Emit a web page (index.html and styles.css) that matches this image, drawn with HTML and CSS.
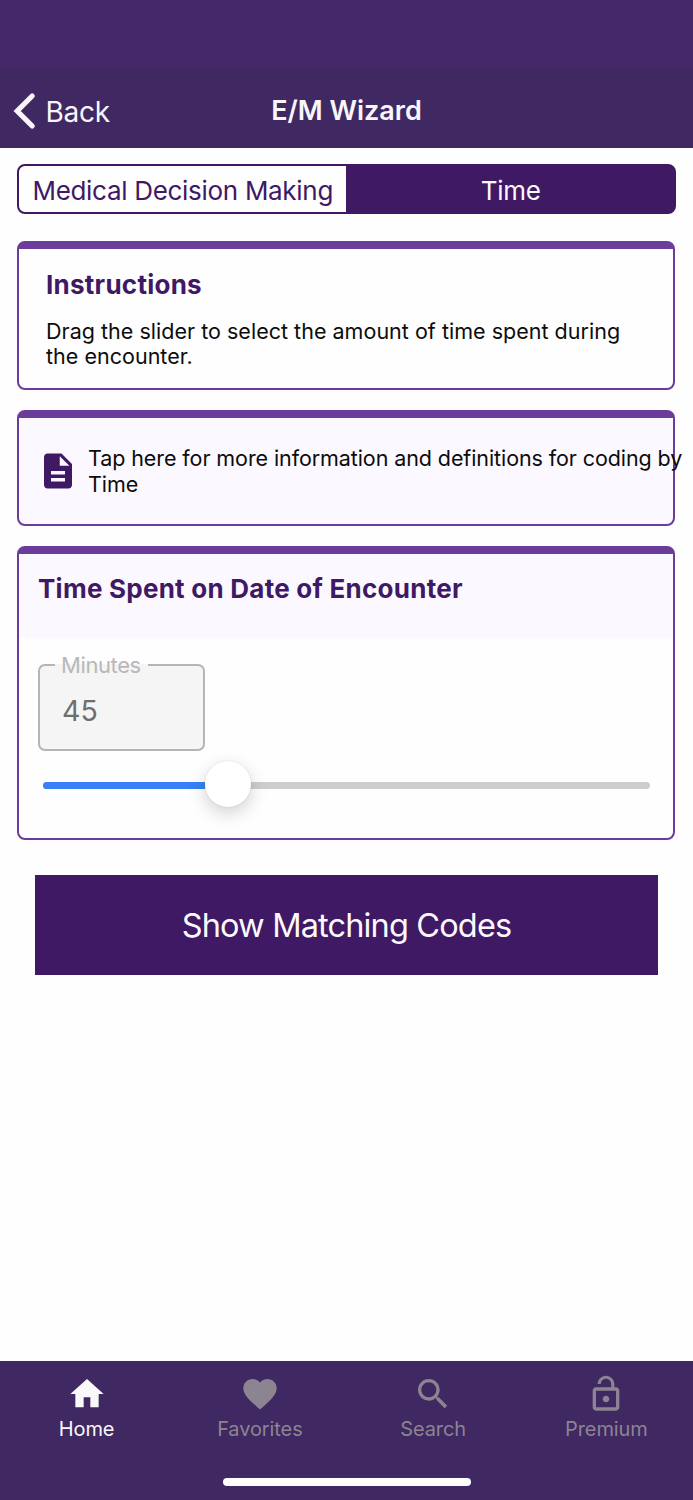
FILE: index.html
```html
<!DOCTYPE html>
<html lang="en">
<head>
<meta charset="utf-8">
<title>E/M Wizard</title>
<link rel="stylesheet" href="styles.css">
</head>
<body>
<div class="app">
  <header class="header">
    <div class="status"></div>
    <nav class="nav">
      <a class="back">
        <svg class="chevron" viewBox="0 0 24 38"><path d="M19.200 4L4.200 19l15 15" fill="none" stroke="currentColor" stroke-width="5.200" stroke-linecap="round"/></svg>
        <span class="back-label">Back</span>
      </a>
      <h1 class="title"><span>E/M Wizard</span></h1>
      <div></div>
    </nav>
  </header>
  <main class="content">
    <div class="segments">
      <div class="segment"><span class="seg-mdm">Medical Decision Making</span></div>
      <div class="segment active"><span class="seg-time">Time</span></div>
    </div>
    <section class="card instructions">
      <h2 class="heading">Instructions</h2>
      <p class="body-text"><span>Drag the slider to select the amount of time spent during</span><br><span>the encounter.</span></p>
    </section>
    <section class="card info">
      <svg class="doc" viewBox="0 0 24 24"><path fill="currentColor" d="M14 2H6c-1.100 0-1.990.9-1.990 2L4 20c0 1.100.89 2 1.990 2H18c1.100 0 2-.9 2-2V8l-6-6zm2 16H8v-2h8v2zm0-4H8v-2h8v2zm-3-5V3.500L18.500 9H13z"/></svg>
      <p class="body-text"><span>Tap here for more information and definitions for coding by</span><br><span>Time</span></p>
    </section>
    <section class="card time">
      <div class="time-head"><h2 class="time-heading">Time Spent on Date of Encounter</h2></div>
      <fieldset class="field">
        <legend class="legend"><span>Minutes</span></legend>
        <span class="value">45</span>
      </fieldset>
      <div class="slider">
        <div class="fill"></div>
        <div class="knob"></div>
      </div>
    </section>
    <button class="show"><span>Show Matching Codes</span></button>
  </main>
  <footer class="tabs">
    <div class="tab-row">
      <div class="tab selected">
        <svg class="icon" viewBox="0 0 24 24"><path fill="currentColor" d="M10 20v-6h4v6h5v-8h3L12 3 2 12h3v8z"/></svg>
        <span>Home</span>
      </div>
      <div class="tab">
        <svg class="icon" viewBox="0 0 24 24"><path fill="currentColor" d="M12 21.350l-1.450-1.320C5.400 15.360 2 12.280 2 8.500 2 5.420 4.420 3 7.500 3c1.740 0 3.410.81 4.500 2.090C13.090 3.810 14.760 3 16.500 3 19.580 3 22 5.420 22 8.500c0 3.780-3.400 6.860-8.550 11.540L12 21.350z"/></svg>
        <span>Favorites</span>
      </div>
      <div class="tab">
        <svg class="icon" viewBox="0 0 24 24"><path fill="currentColor" d="M15.500 14h-.79l-.28-.27C15.410 12.590 16 11.110 16 9.500 16 5.910 13.090 3 9.500 3S3 5.910 3 9.500 5.910 16 9.500 16c1.610 0 3.090-.59 4.230-1.570l.27.28v.79l5 4.990L20.490 19l-4.990-5zm-6 0C7.010 14 5 11.990 5 9.500S7.010 5 9.500 5 14 7.010 14 9.500 11.990 14 9.500 14z"/></svg>
        <span>Search</span>
      </div>
      <div class="tab">
        <svg class="icon" viewBox="0 0 24 24"><path fill="currentColor" d="M12 17c1.100 0 2-.9 2-2s-.9-2-2-2-2 .9-2 2 .9 2 2 2zm6-9h-1V6c0-2.760-2.240-5-5-5S7 3.240 7 6h1.900c0-1.710 1.390-3.100 3.100-3.100s3.100 1.390 3.100 3.100v2H6c-1.100 0-2 .9-2 2v10c0 1.100.9 2 2 2h12c1.100 0 2-.9 2-2V10c0-1.100-.9-2-2-2zm0 12H6V10h12v10z"/></svg>
        <span>Premium</span>
      </div>
    </div>
    <div class="home-bar"></div>
  </footer>
</div>
</body>
</html>
```
FILE: styles.css
```css
* { box-sizing: border-box; }
body, h1, h2, p { margin: 0; }
body { background: #fefefe; font-family: Inter, "Liberation Sans", sans-serif; }
span { white-space: nowrap; }
svg { display: block; flex: none; }
.app { width: 693px; height: 1500px; display: flex; flex-direction: column; overflow: hidden; }
.header { height: 147.5px; background: #402862; color: #f8f6fa; }
.status { height: 67px; background: #452868; }
.nav { height: 80.5px; display: grid; grid-template-columns: 1fr auto 1fr; align-items: center; padding: 7px 13px 0; }
.back { display: flex; align-items: center; gap: 8.500px; }
.chevron { width: 24px; height: 38px; }
.back-label { font-size: 28px; line-height: 34px; letter-spacing: -0.3px; padding-top: 2px; }
.title { font-size: 27px; line-height: 34px; font-weight: 600; padding-top: 1px; }
.content { flex: 1; padding: 16.500px 18px 0 17px; }
.segments { display: flex; width: 659px; height: 50px; border: 2px solid #401965; border-radius: 8px; background: linear-gradient(90deg, #fefefe 50%, #401965 50%); margin-bottom: 27px; }
.segment { flex: 1; display: flex; align-items: center; justify-content: center; font-size: 26px; color: #401965; padding-top: 3px; }
.seg-mdm { letter-spacing: -0.3px; }
.seg-time { letter-spacing: -0.3px; padding-left: 1px; }
.active { color: #fbf9fc; }
.card { border: 2px solid #6b3c9a; border-top-width: 8.500px; border-radius: 8px; }
.instructions { height: 148.500px; padding: 20px 27px 0; margin-bottom: 20px; }
.heading, .time-heading { font-size: 26px; line-height: 32px; font-weight: 700; letter-spacing: 0.25px; color: #401965; }
.body-text { font-size: 21.500px; line-height: 25.800px; color: #0c0c0c; }
.instructions .body-text { margin-top: 17.500px; letter-spacing: 0.02px; }
.info { height: 116px; background: #fbf9ff; display: flex; align-items: center; gap: 9px; padding: 0 0 0 18px; margin-bottom: 20px; }
.info .body-text { letter-spacing: -0.09px; padding-top: 3px; }
.doc { width: 42px; height: 42px; color: #401965; }
.time { height: 294px; margin-bottom: 35px; }
.time-head { height: 84px; background: #fbf9ff; padding: 19.500px 19px 0; }
.field { width: 167px; height: 98px; margin: 15px 0 0 19px; padding: 17px 0 0 22px; border: 2px solid #b5b5b5; border-radius: 7px; background: #f5f5f5; }
.legend { font-size: 22px; line-height: 24px; letter-spacing: -0.4px; color: #b8b8b8; padding: 0 7px 0 6px; margin-left: -7px; }
.value { display: block; font-size: 28.500px; line-height: 34px; color: #6e6e6e; }
.slider { height: 7px; margin: 31px 23px 0 23.500px; border-radius: 4px; background: #cdcdcd; display: flex; align-items: center; }
.fill { width: 162px; height: 7px; border-radius: 4px 0 0 4px; background: #3880f8; }
.knob { width: 46px; height: 46px; flex: none; border-radius: 50%; background: #fff; margin-top: -3px; box-shadow: 0 6px 18px rgba(0,0,0,.18), 0 0 2px rgba(0,0,0,.1); }
.show { display: flex; width: 623px; height: 100px; margin: 0 0 0 18px; padding: 2px 0 0; border: 0; background: #401965; color: #fbf9fc; font: 400 32.500px Inter, sans-serif; letter-spacing: -0.850px; align-items: center; justify-content: center; }
.tabs { height: 139.500px; background: #402862; color: #8c8491; padding-top: 13px; display: flex; flex-direction: column; align-items: center; }
.tab-row { display: flex; width: 100%; height: 104px; }
.tab { flex: 1; display: flex; flex-direction: column; align-items: center; font-size: 20px; line-height: 26px; letter-spacing: -0.1px; gap: 2px; }
.selected { color: #f9f8fa; }
.icon { width: 40px; height: 40px; }
.home-bar { width: 248px; height: 8.500px; border-radius: 5px; background: #fff; }
```
